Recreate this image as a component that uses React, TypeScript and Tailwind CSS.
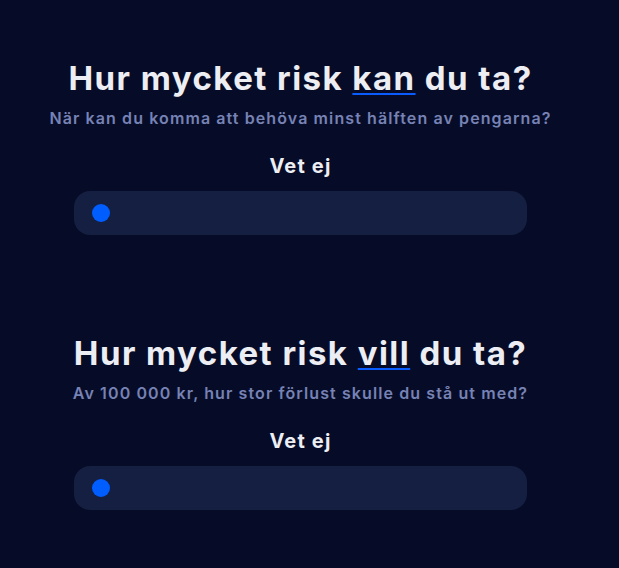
import React from 'react';

const Question = ({ before, word, after, sub }: { before: string; word: string; after: string; sub: string }) => (
  <div className="flex flex-col items-center">
    <h2 className="text-[33px] leading-[40px] font-bold text-[#eceef4] tracking-[1.45px] whitespace-nowrap">
      {before}
      <span className="underline decoration-[#0a5cff] decoration-2 underline-offset-[3px]">{word}</span>
      {after}
    </h2>
    <p className="mt-[10px] text-[16px] leading-5 font-semibold text-[#7782b5] tracking-[1.1px] whitespace-nowrap">{sub}</p>
    <p className="mt-[24px] text-[20px] leading-7 font-bold text-[#eceef4] tracking-[1.2px]">Vet ej</p>
    <div className="mt-[11px] w-[453px] h-[44px] rounded-[16px] bg-[#151f41] flex items-center px-[18px]">
      <span className="w-[18px] h-[18px] rounded-full bg-[#005dff]" />
    </div>
  </div>
);

export default function App() {
  return (
    <div className="min-h-[568px] bg-[#060c27] font-['Inter',sans-serif]">
      <div className="w-[601px] pt-[58px] flex flex-col items-center">
        <Question
          before="Hur mycket risk "
          word="kan"
          after=" du ta?"
          sub="När kan du komma att behöva minst hälften av pengarna?"
        />
        <div className="mt-[98px]">
          <Question
            before="Hur mycket risk "
            word="vill"
            after=" du ta?"
            sub="Av 100 000 kr, hur stor förlust skulle du stå ut med?"
          />
        </div>
      </div>
    </div>
  );
}
